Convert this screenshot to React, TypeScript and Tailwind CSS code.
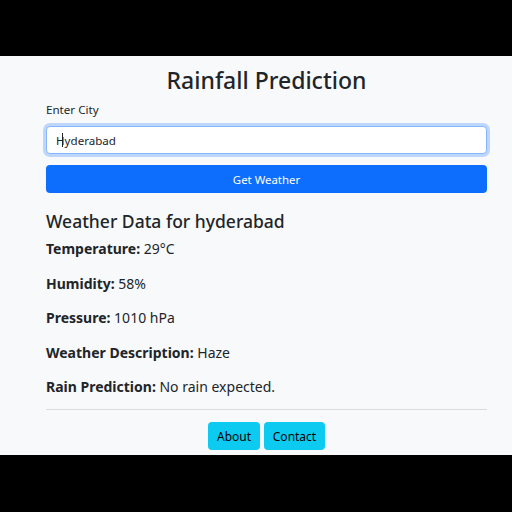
import React from "react";

export default function App() {
  const rows: [string, string][] = [
    ["Temperature:", "29°C"],
    ["Humidity:", "58%"],
    ["Pressure:", "1010 hPa"],
    ["Weather Description:", "Haze"],
    ["Rain Prediction:", "No rain expected."],
  ];
  return (
    <div
      className="w-[512px] h-[512px] bg-black flex flex-col overflow-hidden"
      style={{ fontFamily: '"Noto Sans", "Open Sans", sans-serif' }}
    >
      <div className="h-[56px] shrink-0 bg-black" />
      <div className="h-[399px] shrink-0 bg-[#f8f9fa] text-[#212529] overflow-hidden">
        <div className="ml-[46px] w-[441px] pt-[10px] flex flex-col">
          <h1 className="text-center text-[23px] leading-[28px] font-medium">Rainfall Prediction</h1>
          <label className="mt-[7px] text-[11.6px] leading-[18px]">Enter City</label>
          <div className="relative mt-[7px]">
            <input
              readOnly
              value="Hyderabad"
              className="block w-full h-[28px] rounded-[4px] bg-white border border-[#86b7fe] shadow-[0_0_0_3px_rgba(13,110,253,0.25)] px-[9px] text-[11.6px] text-[#212529] outline-none"
              style={{ fontFamily: '"Noto Sans", sans-serif' }}
            />
            <span className="absolute left-[16px] top-[7px] w-[1px] h-[14px] bg-[#212529]" />
          </div>
          <button className="mt-[11px] h-[28px] w-full rounded-[4px] bg-[#0d6efd] text-white text-[11.4px] pt-[2px]">
            Get Weather
          </button>
          <h4 className="mt-[17px] text-[17.5px] leading-[22px] font-medium">Weather Data for hyderabad</h4>
          <div className="mt-[6px] flex flex-col gap-[12.5px]">
            {rows.map(([k, v]) => (
              <p key={k} className="text-[14px] leading-[22px]">
                <strong className="font-bold">{k}</strong> {v}
              </p>
            ))}
          </div>
          <hr className="mt-[11px] border-0 h-[1px] bg-[#dadbdc]" />
          <div className="mt-[12px] flex justify-center gap-[4px]">
            <button className="h-[28px] w-[52px] rounded-[4px] bg-[#0dcaf0] text-black text-[12px] pt-[2px]">About</button>
            <button className="h-[28px] w-[61px] rounded-[4px] bg-[#0dcaf0] text-black text-[12px] pt-[2px]">Contact</button>
          </div>
        </div>
      </div>
      <div className="flex-1 bg-black" />
    </div>
  );
}
